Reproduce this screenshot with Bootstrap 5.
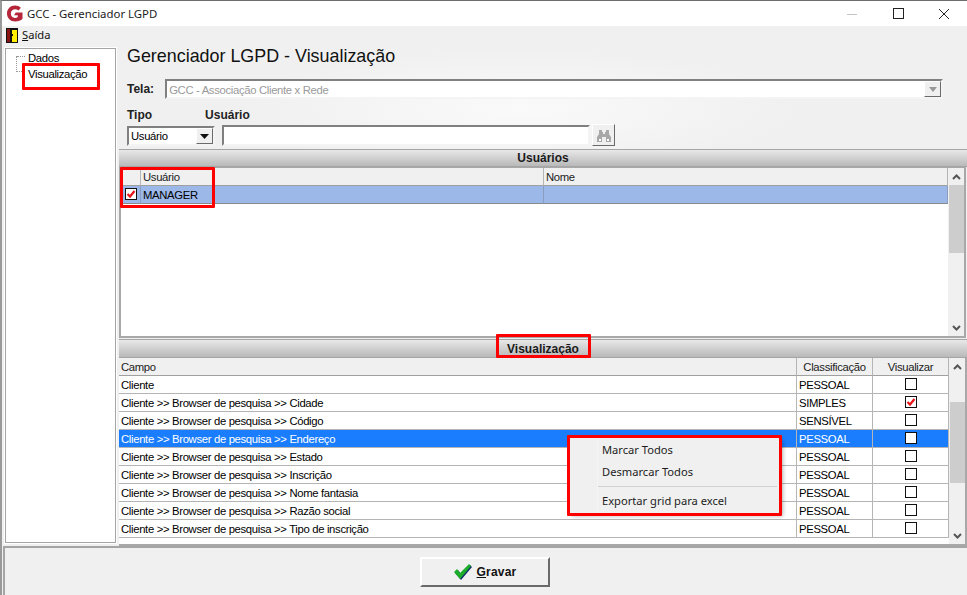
<!DOCTYPE html>
<html lang="pt-BR">
<head>
<meta charset="utf-8">
<title>GCC - Gerenciador LGPD</title>
<link rel="stylesheet" href="https://cdn.jsdelivr.net/npm/bootstrap@5.3.0/dist/css/bootstrap.min.css">
<style>
html,body{margin:0;height:595px;overflow:hidden}
body{width:967px;background:#f0f0f0;color:#000;font-family:"Liberation Sans",sans-serif;font-size:11.3px;letter-spacing:-.33px;line-height:16px;position:relative}
.win-wrap{height:595px;border-top:1px solid #6d6d6d;border-left:2px solid #9a9a9a}
.titlebar{height:25px;background:#fff;font-family:"Noto Sans",sans-serif;font-size:11.4px;letter-spacing:0;color:#222;flex:none}
.titlebar .logo{margin:0 3px 0 4px}
.capbtn{width:46px;height:25px}
.menubar{height:18px;padding-left:4px;font-family:"Noto Sans",sans-serif;font-size:11.2px;letter-spacing:0;color:#111;flex:none}
.menubar u{text-underline-offset:1px}
.work{height:502px;flex:none}
.tree{width:113px;margin:3px 0 2px 2px;background:#fff;border:2px solid #a5a5a5;outline:1px solid #fff;outline-offset:-1px;position:relative;flex:none}
.tree-item{position:absolute;left:22px;white-space:nowrap}
.tree-dots{position:absolute;left:10px;top:7px;width:8px;height:16px;border-left:1px dotted #999;border-bottom:1px dotted #999}
.tree-dots::before{content:"";position:absolute;left:0;top:0;width:8px;border-top:1px dotted #999}
.pane{flex:1;min-width:0;margin-left:1px;background:radial-gradient(ellipse 280px 60px at 400px 65px,#fafafa,#f0f0f0)}
.pane-head{height:24px;line-height:24px;margin-left:9px;font-size:17.9px;letter-spacing:0;color:#111;flex:none}
.rowtela{height:20px;margin:11px 0 0 9px;flex:none}
.lblb{font-weight:700;font-size:12px;letter-spacing:0;color:#222}
.tela-sel{width:778px;height:20px;margin-left:11px;background:#fff;border:2px solid;border-color:#808080 #f4f4f4 #f4f4f4 #808080;color:#9a9a9a;padding-left:2px;line-height:18px}
.ddbtn{width:17px;height:16px;background:#f0f0f0;border:1px solid;border-color:#fff #6a6a6a #6a6a6a #fff;flex:none}
.rowlbl{height:16px;margin:8px 0 0 9px;flex:none}
.rowctl{height:22px;margin:1px 0 3px 9px;flex:none}
.tipo-sel{width:88px;height:20px;margin-top:2px;background:#fff;border:2px solid;border-color:#808080 #f4f4f4 #f4f4f4 #808080;padding-left:2px;line-height:16px}
.usr-inp{width:368px;height:21px;margin:1px 0 0 7px;background:#fff;border:2px solid;border-color:#808080 #f4f4f4 #f4f4f4 #808080}
.findbtn{width:23px;height:22px;margin-left:2px;background:#f0f0f0;border:1px solid;border-color:#fff #6a6a6a #6a6a6a #fff}
.bandhead{height:18px;margin-left:1px;flex:none;border-top:1px solid #a5a5a5;border-bottom:1px solid #a5a5a5;background:linear-gradient(#e8e8e8,#b9b9b9);text-align:center;font-weight:700;font-size:12px;letter-spacing:0;line-height:17px;color:#1a1a1a}
.bandhead.b2{height:19px;margin-top:1px;padding-top:1px}
.gridfr{margin-left:1px;background:#fff;flex:none}
.gridfr.g1{height:171px;margin-right:1px;border:2px solid #a8a8a8;border-top-width:1px}
.gridfr.g2{height:188px;border-right:2px solid #a8a8a8;border-bottom:2px solid #a8a8a8}
.gridarea{flex:1;min-width:0;overflow:hidden}
.tblx{table-layout:fixed;width:100%;margin:0;--bs-table-bg:transparent;border-collapse:separate;border-spacing:0;color:#000;font-size:11.3px}
.tblx td,.tblx th{height:18px;padding:2px 0 0 2px;line-height:15px;border:0;border-right:1px solid #b5b5b5;border-bottom:1px solid #b5b5b5;font-weight:400;white-space:nowrap;overflow:hidden;box-shadow:none}
.tblx th{background:#f0f0f0;color:#222;border-bottom-color:#a0a0a0}
.g1 .tblx th{padding-top:1px}
.tblx .ctr{text-align:center;padding:2px 0 0}
.tblx td.ctr{padding:0}
.tblx tr.sel td{background:#1a7dfd;color:#fff}
.tblx tr.sel1 td{background:#9cb8e8;border-bottom-color:#8a8a8a;border-right-color:#8a9cc0}
.cbx{display:block;width:12px;height:12px;margin:2px auto 0;background:#fff;border:1px solid #111}
.vbar{width:16px;background:#f0f0f0;flex:none;position:relative}
.vbar .arr{height:17px}
.vbar .thumb{position:absolute;left:1px;right:0;background:#cdcdcd}
.g1 .thumb{top:17px;height:68px}
.g2 .thumb{top:44px;height:81px}
.vbar .arr.dn{position:absolute;bottom:0;left:0;right:0}
.foot{height:49px;border-top:2px solid #a5a5a5;margin:0 0 0 1px;border-left:2px solid #a5a5a5;padding:9px 2px 0 0;flex:none}
.btn.gravar{width:130px;height:30px;padding:0;background:#f0f0f0;border:2px solid;border-color:#fff #6a6a6a #6a6a6a #fff;border-radius:0;font-weight:700;font-size:12px;letter-spacing:.2px;color:#111;--bs-btn-hover-bg:#f0f0f0}
.ctxmenu{position:absolute;left:569px;top:437px;width:211px;height:76px;background:#f0f0f0;box-shadow:3px 3px 4px rgba(0,0,0,.3);font-family:"Noto Sans",sans-serif;font-size:11.15px;letter-spacing:0;color:#1c1c1c}
.ctxmenu .mi{position:absolute;left:33px;white-space:nowrap}
.ctxmenu .gut{position:absolute;left:28px;top:0;bottom:0;width:1px;background:#f4f4f4}
.ctxmenu hr{position:absolute;left:29px;right:3px;top:49px;margin:0;border:0;border-top:1px solid #d0d0d0;opacity:1}
.redbox{position:absolute;border:3px solid #f00;border-radius:1px;pointer-events:none}
.rb1{left:22px;top:63px;width:78px;height:27px}
.rb2{left:120px;top:167px;width:95px;height:41px}
.rb3{left:496px;top:334px;width:95px;height:24px}
.rb4{left:567px;top:435px;width:215px;height:81px}
</style>
</head>
<body>
<div class="win-wrap d-flex flex-column">
  <div class="titlebar d-flex align-items-center">
    <svg class="logo" width="18" height="17" viewBox="0 0 17 17"><path d="M8.5 .6c2.2 0 4.300.8 5.900 2.200L12 5.400C11 4.600 9.800 4.200 8.700 4.200 6.200 4.200 4.300 6 4.300 8.500s1.800 4.400 4.200 4.400c1.100 0 2-.3 2.700-.9V10.300H7.600L9.200 7.500H16v6.300C14.500 15.500 11.700 16.500 8.600 16.500 4 16.500.5 13 .5 8.500S4 .6 8.500 .6z" fill="#b5263b"/></svg>
    <span>GCC - Gerenciador LGPD</span>
    <div class="ms-auto d-flex">
      <div class="capbtn d-flex align-items-center justify-content-center"><svg width="12" height="12" viewBox="0 0 12 12"><path d="M1 6.500h10" stroke="#c4c4c4" fill="none"/></svg></div>
      <div class="capbtn d-flex align-items-center justify-content-center"><svg width="11" height="11" viewBox="0 0 11 11"><rect x=".5" y=".5" width="10" height="10" fill="none" stroke="#222"/></svg></div>
      <div class="capbtn d-flex align-items-center justify-content-center"><svg width="12" height="12" viewBox="0 0 12 12"><path d="M1 1l10 10M11 1L1 11" stroke="#222" fill="none"/></svg></div>
    </div>
  </div>
  <div class="menubar d-flex align-items-center">
    <svg width="12" height="15" viewBox="0 0 12 15"><rect width="12" height="15" fill="#111"/><rect x="1" y="1" width="3" height="13" fill="#8a1414"/><path d="M4 1h1l1 1h5v12H6L4 12z" fill="#111"/><path d="M6 2h5v12H6z" fill="#ffee00"/><rect x="6" y="6" width="1" height="2" fill="#111"/></svg>
    <span style="margin-left:4px"><u>S</u>aída</span>
  </div>
  <div class="work d-flex">
    <div class="tree">
      <div class="tree-dots"></div>
      <div class="tree-item" style="top:1px">Dados</div>
      <div class="tree-item" style="top:17px">Visualização</div>
    </div>
    <div class="pane d-flex flex-column">
      <div class="pane-head">Gerenciador LGPD - Visualização</div>
      <div class="rowtela d-flex align-items-center">
        <span class="lblb">Tela:</span>
        <div class="tela-sel d-flex justify-content-between">
          <span>GCC - Associação Cliente x Rede</span>
          <div class="ddbtn d-flex align-items-center justify-content-center"><svg width="8" height="5" viewBox="0 0 8 5"><path d="M0 0h8L4 5z" fill="#999"/></svg></div>
        </div>
      </div>
      <div class="rowlbl d-flex lblb"><span>Tipo</span><span style="margin-left:53px">Usuário</span></div>
      <div class="rowctl d-flex">
        <div class="tipo-sel d-flex justify-content-between">
          <span>Usuário</span>
          <div class="ddbtn d-flex align-items-center justify-content-center"><svg width="9" height="5" viewBox="0 0 9 5"><path d="M0 0h9L4.500 5z" fill="#111"/></svg></div>
        </div>
        <div class="usr-inp"></div>
        <div class="findbtn d-flex align-items-center justify-content-center"><svg width="14" height="13" viewBox="0 0 14 13"><path d="M2 1h3v2h1v2h2V3h1V1h3v4l2 3v5H9V8H5v5H0V8l2-3z" fill="#a8a8a8"/><rect x="2" y="10" width="2" height="2" fill="#fff"/><rect x="10" y="10" width="2" height="2" fill="#fff"/></svg></div>
      </div>

      <div class="bandhead">Usuários</div>
      <div class="gridfr g1 d-flex">
        <div class="gridarea">
          <table class="table tblx">
            <colgroup><col style="width:20px"><col style="width:403px"><col></colgroup>
            <thead><tr><th></th><th>Usuário</th><th>Nome</th></tr></thead>
            <tbody><tr class="sel1"><td class="ctr"><span class="cbx"><svg class="d-block" width="10" height="10" viewBox="0 0 10 10"><path d="M1.500 5l2.500 2.500L8.500 2" stroke="#e8141c" stroke-width="2.200" fill="none"/></svg></span></td><td>MANAGER</td><td></td></tr></tbody>
          </table>
        </div>
        <div class="vbar">
          <div class="arr d-flex align-items-center justify-content-center"><svg width="9" height="6" viewBox="0 0 9 6"><path d="M1 5l3.500-3.500L8 5" stroke="#555" stroke-width="2" fill="none"/></svg></div>
          <div class="thumb"></div>
          <div class="arr dn d-flex align-items-center justify-content-center"><svg width="9" height="6" viewBox="0 0 9 6"><path d="M1 1l3.500 3.500L8 1" stroke="#555" stroke-width="2" fill="none"/></svg></div>
        </div>
      </div>

      <div class="bandhead b2">Visualização</div>
      <div class="gridfr g2 d-flex">
        <div class="gridarea">
          <table class="table tblx">
            <colgroup><col><col style="width:76px"><col style="width:76px"></colgroup>
            <thead><tr><th>Campo</th><th class="ctr">Classificação</th><th class="ctr">Visualizar</th></tr></thead>
            <tbody>
              <tr><td>Cliente</td><td>PESSOAL</td><td class="ctr"><span class="cbx"></span></td></tr>
              <tr><td>Cliente &gt;&gt; Browser de pesquisa &gt;&gt; Cidade</td><td>SIMPLES</td><td class="ctr"><span class="cbx"><svg class="d-block" width="10" height="10" viewBox="0 0 10 10"><path d="M1.500 5l2.500 2.500L8.500 2" stroke="#e8141c" stroke-width="2.200" fill="none"/></svg></span></td></tr>
              <tr><td>Cliente &gt;&gt; Browser de pesquisa &gt;&gt; Código</td><td>SENSÍVEL</td><td class="ctr"><span class="cbx"></span></td></tr>
              <tr class="sel"><td>Cliente &gt;&gt; Browser de pesquisa &gt;&gt; Endereço</td><td>PESSOAL</td><td class="ctr"><span class="cbx"></span></td></tr>
              <tr><td>Cliente &gt;&gt; Browser de pesquisa &gt;&gt; Estado</td><td>PESSOAL</td><td class="ctr"><span class="cbx"></span></td></tr>
              <tr><td>Cliente &gt;&gt; Browser de pesquisa &gt;&gt; Inscrição</td><td>PESSOAL</td><td class="ctr"><span class="cbx"></span></td></tr>
              <tr><td>Cliente &gt;&gt; Browser de pesquisa &gt;&gt; Nome fantasia</td><td>PESSOAL</td><td class="ctr"><span class="cbx"></span></td></tr>
              <tr><td>Cliente &gt;&gt; Browser de pesquisa &gt;&gt; Razão social</td><td>PESSOAL</td><td class="ctr"><span class="cbx"></span></td></tr>
              <tr><td>Cliente &gt;&gt; Browser de pesquisa &gt;&gt; Tipo de inscrição</td><td>PESSOAL</td><td class="ctr"><span class="cbx"></span></td></tr>
            </tbody>
          </table>
        </div>
        <div class="vbar">
          <div class="arr d-flex align-items-center justify-content-center"><svg width="9" height="6" viewBox="0 0 9 6"><path d="M1 5l3.500-3.500L8 5" stroke="#555" stroke-width="2" fill="none"/></svg></div>
          <div class="thumb"></div>
          <div class="arr dn d-flex align-items-center justify-content-center"><svg width="9" height="6" viewBox="0 0 9 6"><path d="M1 1l3.500 3.500L8 1" stroke="#555" stroke-width="2" fill="none"/></svg></div>
        </div>
      </div>
    </div>
  </div>
  <div class="foot d-flex justify-content-center">
    <button type="button" class="btn gravar d-flex align-items-center justify-content-center gap-1">
      <svg width="19" height="17" viewBox="0 0 19 17"><path d="M1 9l3-3 3 4 9-9 2 2L7 16z" fill="#0f2f6b"/><path d="M0 8l3-3 3 4 9-9 2 2L6 15z" fill="#1cae2a"/></svg>
      <span><u>G</u>ravar</span>
    </button>
  </div>
</div>

<div class="ctxmenu">
  <div class="gut"></div>
  <div class="mi" style="top:5px">Marcar Todos</div>
  <div class="mi" style="top:27px">Desmarcar Todos</div>
  <hr>
  <div class="mi" style="top:56px">Exportar grid para excel</div>
</div>
<div class="redbox rb1"></div>
<div class="redbox rb2"></div>
<div class="redbox rb3"></div>
<div class="redbox rb4"></div>
<script src="https://cdn.jsdelivr.net/npm/bootstrap@5.3.0/dist/js/bootstrap.bundle.min.js"></script>
</body>
</html>
